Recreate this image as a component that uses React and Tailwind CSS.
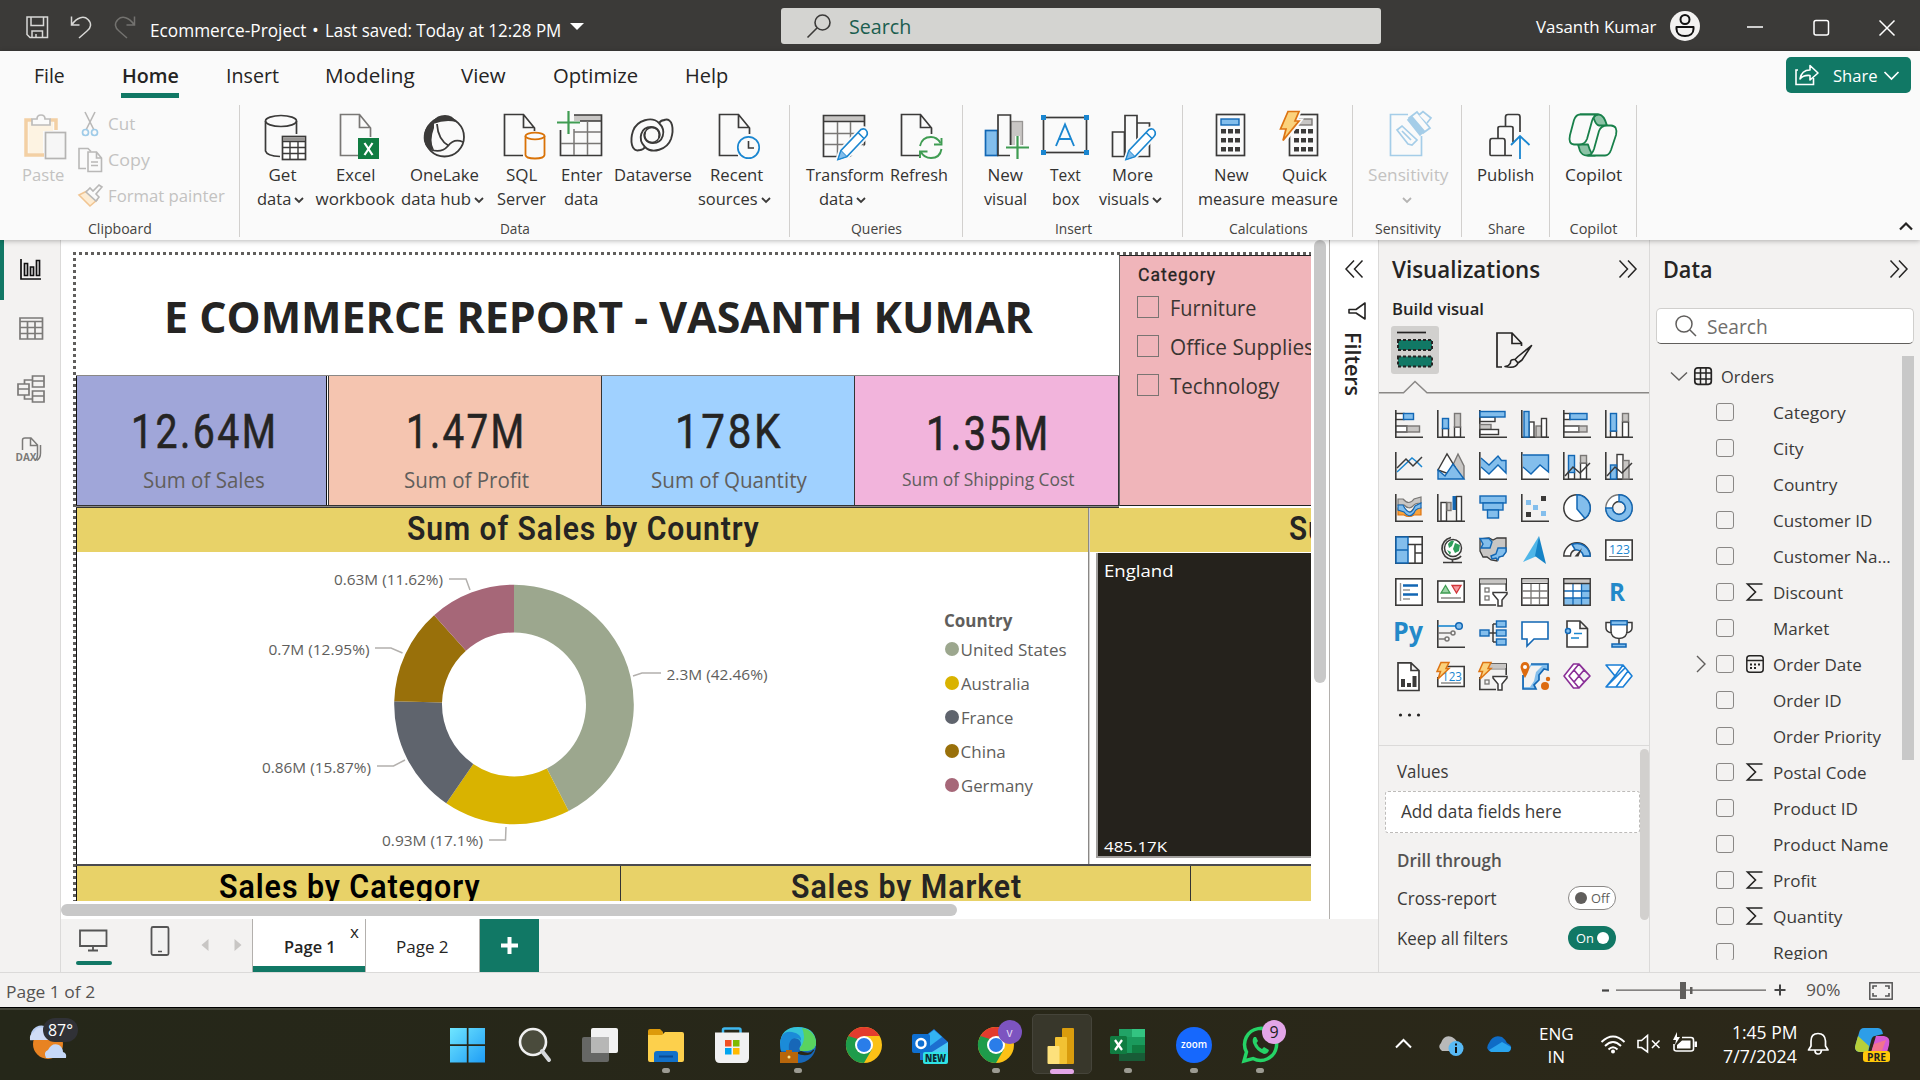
import React, { useLayoutEffect, useRef, useState } from "react";

/* Text set to a fixed advance width, so labels keep their metrics in any fallback font. */
function T({ w, dy = 0, className = "", children }) {
  const ref = useRef(null);
  const [scale, setScale] = useState(1);
  useLayoutEffect(() => {
    if (w && ref.current) setScale((w - 1) / ref.current.offsetWidth);
  }, [w]);
  return (
    <span className={"block shrink-0 whitespace-nowrap " + className} style={w ? { width: w } : undefined}>
      <span ref={ref} className="inline-block origin-left" style={{ transform: `translate(1px, ${dy}px) scaleX(${scale})` }}>
        {children}
      </span>
    </span>
  );
}

const INK = "#3b3a39";
const BLUE = "#1a86d0";
const LB = "#83beec";
const DB = "#1267b4";

function Svg({ w, h, vb, className = "", children }) {
  return (
    <svg width={w} height={h} viewBox={vb || `0 0 ${w} ${h}`} fill="none" className={"block shrink-0 overflow-visible " + className}>
      {children}
    </svg>
  );
}

/* ---------- Title bar ---------- */
function TitleBar() {
  return (
    <header className="flex h-[51px] shrink-0 items-center bg-[#3b3a38] text-white">
      <div className="flex h-full w-[781px] items-center">
        <Svg w={148} h={51}>
          <g stroke="#d8d8d6" strokeWidth="1.5">
            <path d="M27 17H47.5V37.5H30L27 34.5Z M31 17V25.5H43.5V17 M32 37V31H42.5V37 M36 37V34" />
            <path d="M71.5 16.5V25H79.5 M72 24.5C77 17 84 15.5 88 19.5C92 23.5 91 28 87 31L79 38" />
            <path stroke="#73726f" d="M134.5 16.5V25H126.5 M134 24.5C129 17 122 15.5 118 19.5C114 23.5 115 28 119 31L127 38" />
          </g>
        </Svg>
        <div className="ml-[1px] flex items-center pt-[8px] text-[18px] leading-6">
          <T w={157}>Ecommerce-Project</T>
          <T w={8} className="ml-[5px]">•</T>
          <T w={237} className="ml-[5px]">Last saved: Today at 12:28 PM</T>
        </div>
        <Svg w={14} h={8} className="ml-[9px] mt-[3px]">
          <path d="M0 0H14L7 7Z" fill="#fff" />
        </Svg>
      </div>
      <div className="flex h-9 w-[600px] items-center rounded-[3px] bg-[#d4d4d1]">
        <Svg w={24} h={24} className="ml-[26px]">
          <circle cx="15.5" cy="8.5" r="7.5" stroke={INK} strokeWidth="1.6" />
          <path d="M10 14L0.5 23.5" stroke={INK} strokeWidth="1.6" />
        </Svg>
        <T w={63} dy={1} className="ml-[17px] text-[20px] leading-6 text-[#1b5e4f]">Search</T>
      </div>
      <T w={121} dy={1} className="ml-[154px] text-[17px] leading-6">Vasanth Kumar</T>
      <Svg w={30} h={30} className="ml-[14px]">
        <circle cx="15" cy="15" r="15" fill="#f3f2f1" />
        <circle cx="15" cy="8.5" r="4.5" stroke="#111" strokeWidth="2" />
        <path d="M6.5 16H23.5V18C23.5 22.5 20 25 15 25S6.5 22.5 6.5 18Z" stroke="#111" strokeWidth="2" strokeLinejoin="round" />
      </Svg>
      <Svg w={150} h={20} className="ml-[46px] mt-[5px]">
        <g stroke="#fff" strokeWidth="1.5">
          <path d="M1 9H17 M133.500 2.500L148.500 17.500M148.500 2.500L133.500 17.500" />
          <rect x="68" y="2.500" width="14.500" height="14.500" rx="2" />
        </g>
      </Svg>
    </header>
  );
}

/* ---------- Ribbon ---------- */
const TABS = [
  ["File", 32, "ml-[33px]"],
  ["Home", 58, "ml-[56px] font-semibold"],
  ["Insert", 54, "ml-[46px]"],
  ["Modeling", 91, "ml-[45px]"],
  ["View", 46, "ml-[45px]"],
  ["Optimize", 86, "ml-[46px]"],
  ["Help", 44, "ml-[46px]"],
];

function Chev({ color = INK }) {
  return (
    <Svg w={10} h={7} className="mt-[3px]">
      <path d="M1 1L5 5L9 1" stroke={color} strokeWidth="1.8" />
    </Svg>
  );
}

function Btn({ className, vb, l1, w1, l2, w2, chev, dim, children }) {
  const w = Number(vb.split(" ")[2]);
  return (
    <div className={"flex shrink-0 flex-col items-center pt-[3px] text-[17px] leading-6 " + (dim ? "text-[#c3c2c1] " : "text-[#333231] ") + className}>
      <Svg w={w} h={54} vb={vb} className="mb-px">{children}</Svg>
      <T w={w1}>{l1}</T>
      <div className={"flex h-6 items-center justify-center " + (chev && l2 ? "-ml-[4px] gap-[3px]" : "")}>
        {l2 && <T w={w2}>{l2}</T>}
        {chev && <Chev color={dim ? "#b5b4b3" : INK} />}
      </div>
    </div>
  );
}

function Group({ className, label, lw, children }) {
  return (
    <section className={"flex h-[132px] shrink-0 flex-col border-r border-[#d2d0ce] " + className}>
      <div className="flex h-[114px]">{children}</div>
      <div className="flex justify-center text-[14.500px] leading-[21px] text-[#444341]">
        <T w={lw} dy={2}>{label}</T>
      </div>
    </section>
  );
}

function Doc({ x, c = INK, cut }) {
  return <path d={`M${x + 30.500} ${cut || 134}V128L${x + 19.500} 114.500H${x + 0.500}V155.500H${x + 19} M${x + 19.500} 115V127.500H${x + 30}`} stroke={c} strokeWidth="1.7" />;
}

function Pencil({ x, y }) {
  return (
    <g>
      <path d={`M${x} ${y + 31}L${x + 3} ${y + 22}L${x + 23} ${y + 1}Q${x + 27} ${y - 1} ${x + 29} ${y + 3}Q${x + 30} ${y + 6} ${x + 28} ${y + 8}L${x + 9} ${y + 28}Z`} fill="#fafafa" stroke="#fafafa" strokeWidth="5" />
      <path d={`M${x} ${y + 31}L${x + 3} ${y + 22}L${x + 23} ${y + 1}Q${x + 27} ${y - 1} ${x + 29} ${y + 3}Q${x + 30} ${y + 6} ${x + 28} ${y + 8}L${x + 9} ${y + 28}Z M${x + 20} ${y + 4}L${x + 26} ${y + 10}`} fill="#fff" stroke={BLUE} strokeWidth="1.6" />
      <path d={`M${x} ${y + 31}L${x + 3} ${y + 22}L${x + 9} ${y + 28}Z`} fill={LB} stroke={BLUE} />
    </g>
  );
}

function Calc({ x, gray }) {
  return (
    <g>
      <rect x={x + 0.5} y="114.500" width="28" height="41" fill="#fafafa" stroke={INK} strokeWidth="1.7" />
      <rect x={x + 5} y="119" width="18" height="6" fill={gray ? "#c8c6c4" : LB} stroke={gray ? "#797775" : DB} strokeWidth="1.4" />
      {[129, 138, 147].map((y) => [5, 12, 19].map((d) => <rect key={y + "-" + d} x={x + d} y={y} width="5" height="4.5" fill={INK} />))}
    </g>
  );
}

function Ribbon() {
  return (
    <div className="relative z-10 flex h-[189px] shrink-0 flex-col bg-[#fafafa] shadow-[0_1px_5px_rgba(0,0,0,0.28)]">
      <div className="flex h-[54px] text-[20px] text-[#252423]">
        {TABS.map(([t, w, c]) => (
          <div key={t} className={"flex h-[47px] shrink-0 flex-col " + c}>
            <T w={w} dy={1} className="pt-[10px] leading-[28px]">{t}</T>
            {t === "Home" && <div className="mt-[4px] h-[5px] bg-[#117865]" />}
          </div>
        ))}
        <div className="mr-[9px] ml-auto mt-[6px] flex h-9 w-[125px] items-center rounded-[5px] bg-[#117865] text-white">
          <Svg w={24} h={22} className="ml-[9px]">
            <path d="M3 6H1V20.500H18.500V14" stroke="#fff" strokeWidth="1.6" />
            <path d="M5 15C6 9 10 6 15 6V1.500L23 9L15 16V11.500C10 11 7 12.500 5 15Z" stroke="#fff" strokeWidth="1.6" strokeLinejoin="round" />
          </Svg>
          <T w={46} dy={1} className="ml-[13px] text-[17px] leading-6">Share</T>
          <Svg w={15} h={9} className="ml-[6px]">
            <path d="M0.500 1L7.500 8L14.500 1" stroke="#fff" strokeWidth="1.7" />
          </Svg>
        </div>
      </div>

      <div className="flex">
        <Group className="w-[240px]" label="Clipboard" lw={65}>
          <Btn className="ml-[8px] w-[68px]" vb="8 108 68 54" l1="Paste" w1={43} dim>
            <path d="M32 120H26V155H44 M50 120H56V130" stroke="#f3d0a4" strokeWidth="3.500" />
            <path d="M28.500 122V153H43V131H53V122Z" fill="#fdf3e2" />
            <path d="M32 125V119H37Q37 115 41 115T45 119H50V125Z" fill="#fafafa" stroke="#bdbcbb" strokeWidth="1.700" />
            <rect x="45.500" y="132.500" width="20" height="26" fill="#f6f6f6" stroke="#b5b4b3" strokeWidth="1.700" />
          </Btn>
          <div className="flex flex-col pl-[2px] text-[17px] leading-9 text-[#c3c2c1]">
            <div className="flex h-9">
              <Svg w={30} h={36} vb="78 104 30 36">
                <path d="M85 111L94 129 M95 111L86 129" stroke="#b9b8b7" strokeWidth="1.600" />
                <circle cx="85.500" cy="131.500" r="3" stroke="#9fcbe8" strokeWidth="1.700" />
                <circle cx="94.500" cy="131.500" r="3" stroke="#9fcbe8" strokeWidth="1.700" />
              </Svg>
              <T w={28} dy={1} className="ml-[-1px]">Cut</T>
            </div>
            <div className="flex h-9">
              <Svg w={30} h={36} vb="78 140 30 36">
                <path d="M86 167.500H79V147.500H88L91 150.500" stroke="#b9b8b7" strokeWidth="1.600" />
                <path d="M88 151H96.500L101.500 157V170.500H88Z M96.500 151V157H101 M91 161H98M91 164.500H98" stroke="#b9b8b7" strokeWidth="1.600" />
              </Svg>
              <T w={43} dy={1} className="ml-[-1px]">Copy</T>
            </div>
            <div className="flex h-9">
              <Svg w={30} h={36} vb="78 176 30 36">
                <path d="M79 194L87 190L97 199L90 205Z" fill="#fdecd3" stroke="#f1c592" strokeWidth="1.600" />
                <path d="M86 191L90 187L93 190L99 184L102 186L96 193L99 196L96 200Z" fill="#fafafa" stroke="#b9b8b7" strokeWidth="1.600" />
              </Svg>
              <T w={118} dy={1} className="ml-[-1px]">Format painter</T>
            </div>
          </div>
        </Group>

        <Group className="w-[550px]" label="Data" lw={31}>
          <Btn className="ml-[9px] w-[66px]" vb="249 108 66 54" l1="Get" w1={29} l2="data" w2={35} chev>
            <ellipse cx="281" cy="121" rx="15.500" ry="5.500" stroke={INK} strokeWidth="1.700" />
            <path d="M265.500 121V151Q267 156 280 156.500 M296.500 121V134" stroke={INK} strokeWidth="1.700" />
            <rect x="282.500" y="136.500" width="23" height="23" fill="#fff" stroke={INK} strokeWidth="1.700" />
            <path d="M283 139H305" stroke="#979593" strokeWidth="3.500" />
            <path d="M283 141.500H305M283 147.500H305M283 153.500H305M290 141V159M298 141V159" stroke={INK} strokeWidth="1.400" />
          </Btn>
          <Btn className="w-[79px]" vb="315 108 79 54" l1="Excel" w1={40} l2="workbook" w2={80}>
            <Doc x={340} c="#797775" cut={137} />
            <rect x="358" y="138" width="21" height="21" fill="#107c41" />
            <path d="M364.500 143L372.500 155 M372.500 143L364.500 155" stroke="#fff" strokeWidth="2.200" />
          </Btn>
          <Btn className="ml-[3px] w-[93px]" vb="397 108 93 54" l1="OneLake" w1={70} l2="data hub" w2={71} chev>
            <circle cx="444.500" cy="137" r="19.500" stroke={INK} strokeWidth="1.800" />
            <path d="M433 121Q437 115 445 115T456 122Q446 119 433 124Z" fill={INK} />
            <path d="M434 121Q422 128 424 141Q426 150 434 150Q429 141 434 128Z" fill={INK} />
            <path d="M437 124Q438 140 449 146 M429 149Q441 154 448 146Q454 138 463 142" stroke={INK} strokeWidth="1.800" />
          </Btn>
          <Btn className="ml-[4px] w-[54px]" vb="494 108 54 54" l1="SQL" w1={32} l2="Server" w2={50}>
            <Doc x={504} cut={131} />
            <path d="M525.500 136V155Q526 158.500 535 158.500T544.500 155V136" fill="#fafafa" stroke="#d97207" strokeWidth="1.800" />
            <ellipse cx="535" cy="136" rx="9.500" ry="3.300" fill="#fafafa" stroke="#d97207" strokeWidth="1.800" />
          </Btn>
          <Btn className="ml-[8px] w-[49px]" vb="556 108 49 54" l1="Enter" w1={42} l2="data" w2={35}>
            <path d="M574 115H601V121H574Z" fill="#c8c6c4" />
            <path d="M574 115H601.500V155.500H560.500V130 M580 121H601" stroke={INK} strokeWidth="1.700" />
            <path d="M574 132H601M561 143.500H601M574 129V155M587.500 121V155" stroke="#797775" strokeWidth="1.500" />
            <path d="M568.500 111V134M557 122.500H580" stroke="#3f9c52" strokeWidth="2.200" />
          </Btn>
          <Btn className="ml-[6px] w-[83px]" vb="611 108 83 54" l1="Dataverse" w1={79}>
            <path d="M640 150C631 153 630 140 633 131C637 120 652 116 659 123C667 131 663 143 653 143C646 143 643 137 645 132" stroke={INK} strokeWidth="1.900" />
            <path d="M664 120C673 117 674 130 671 139C667 150 652 154 645 147C637 139 641 127 651 127C658 127 661 133 659 138" stroke={INK} strokeWidth="1.900" />
            <circle cx="652" cy="135" r="7.500" stroke={INK} strokeWidth="1.500" />
            <path d="M659 123Q661 120 665 120 M645 147Q643 150 640 150" stroke={INK} strokeWidth="1.900" />
          </Btn>
          <Btn className="w-[83px]" vb="694 108 83 54" l1="Recent" w1={54} l2="sources" w2={61} chev>
            <Doc x={719} />
            <circle cx="748.500" cy="147.500" r="13" fill="#fafafa" />
            <circle cx="748.500" cy="147.500" r="10.700" stroke={BLUE} strokeWidth="1.700" />
            <path d="M748.500 141V148H754" stroke={INK} strokeWidth="1.600" />
          </Btn>
        </Group>

        <Group className="w-[173px]" label="Queries" lw={52}>
          <Btn className="ml-[10px] w-[88px]" vb="800 108 88 54" l1="Transform" w1={79} l2="data" w2={35} chev>
            <path d="M824 116H864V121H824Z" fill="#c8c6c4" />
            <path d="M823.500 115.500H864.500V156.500H823.500ZM824 121.500H864" stroke={INK} strokeWidth="1.700" />
            <path d="M824 133.500H864M824 144.500H864M837.500 122V156M850.500 122V156" stroke="#797775" strokeWidth="1.500" />
            <path d="M849 158V163H880V133Z" fill="#fafafa" />
            <Pencil x={838} y={128.500} />
          </Btn>
          <Btn className="w-[60px]" vb="888 108 60 54" l1="Refresh" w1={59}>
            <Doc x={901} />
            <path d="M920 146Q922 137 931 137Q937 137 940.500 143 M941.500 149Q940 158 931 158Q924 158 921 152" stroke="#3f9c52" strokeWidth="1.900" />
            <path d="M941.500 138V144.500H934 M920 158V151.500H927.500" stroke="#3f9c52" strokeWidth="1.900" />
          </Btn>
        </Group>

        <Group className="w-[220px]" label="Insert" lw={38}>
          <Btn className="ml-[17px] w-[50px]" vb="980 108 50 54" l1="New" w1={37} l2="visual" w2={44}>
            <rect x="1011" y="121.500" width="11.500" height="26" fill="#c8c6c4" stroke="#979593" strokeWidth="1.300" />
            <rect x="985.500" y="130.500" width="12" height="25" fill={LB} stroke={DB} strokeWidth="1.700" />
            <path d="M1010 155.500H998V115H1010.500V146" fill="#fafafa" stroke={INK} strokeWidth="1.700" />
            <path d="M1017.500 136V159M1006 147.500H1029" stroke="#fafafa" strokeWidth="5" />
            <path d="M1017.500 136V159M1006 147.500H1029" stroke="#3f9c52" strokeWidth="2.200" />
          </Btn>
          <Btn className="ml-[10px] w-[50px]" vb="1040 108 50 54" l1="Text" w1={32} l2="box" w2={29}>
            <rect x="1043.500" y="117.500" width="43" height="35" stroke={INK} strokeWidth="1.700" />
            {[[1041, 115], [1084, 115], [1041, 150], [1084, 150]].map(([x, y]) => <rect key={x + "," + y} x={x} y={y} width="5" height="5" fill={BLUE} />)}
            <path d="M1056 146L1065 124.500L1074 146M1059 139H1071" stroke={BLUE} strokeWidth="1.900" />
          </Btn>
          <Btn className="ml-[2px] w-[80px]" vb="1092 108 80 54" l1="More" w1={42} l2="visuals" w2={51} chev>
            <path d="M1112.500 132H1124.500V156.500H1112.500Z M1125 115.500H1137V156.500H1125ZM1137 123H1149.500V156.500H1137Z" stroke={INK} strokeWidth="1.700" />
            <Pencil x={1126} y={128.500} />
          </Btn>
        </Group>

        <Group className="w-[170px]" label="Calculations" lw={80}>
          <Btn className="ml-[14px] w-[68px]" vb="1197 108 68 54" l1="New" w1={36} l2="measure" w2={68}>
            <Calc x={1216} />
          </Btn>
          <Btn className="ml-[5px] w-[68px]" vb="1270 108 68 54" l1="Quick" w1={46} l2="measure" w2={68}>
            <Calc x={1289} gray />
            <path d="M1288 111.500H1299L1295 121H1299L1284 140.500L1286 129H1281Z" fill="#fafafa" stroke="#fafafa" strokeWidth="5" />
            <path d="M1288 111.500H1299L1295 121H1299L1283 140.500L1286 129H1280.500Z" fill="#fbd27c" stroke="#dd7413" strokeWidth="1.700" />
          </Btn>
        </Group>

        <Group className="w-[109px]" label="Sensitivity" lw={67}>
          <Btn className="ml-[9px] w-[90px]" vb="1362 108 90 54" l1="Sensitivity" w1={81} chev dim>
            <g stroke="#a5cde8" strokeWidth="1.700">
              <path d="M1408 114.500H1390.500V155.500H1421.500V136" />
              <path d="M1397 130L1402 126L1417 140L1412 145L1408 144Z M1402 131L1411 140" fill="#fafafa" />
              <path d="M1409 118L1417 112L1430 128L1423 133Z" fill="#fafafa" />
              <path d="M1408 120L1412 117L1424 131L1420 135Z" fill="#a5cde8" />
              <path d="M1419 115L1423 111.500L1431 118L1427 123" fill="#fafafa" />
            </g>
          </Btn>
        </Group>

        <Group className="w-[88px]" label="Share" lw={38}>
          <Btn className="ml-[8px] w-[70px]" vb="1470 108 70 54" l1="Publish" w1={58}>
            <path d="M1512 155.500H1491Q1490 155.500 1490 154V141Q1490 138.500 1492 138.500H1503Q1505 138.500 1505 141V155 M1498 138V128Q1498 126.500 1500 126.500H1511Q1513 126.500 1513 128V142 M1505.500 126V117Q1505.500 114.500 1508 114.500H1518Q1520 114.500 1520 117V132" stroke={INK} strokeWidth="1.700" />
            <path d="M1520 159V136M1511 145L1520 136L1529.500 145" stroke={BLUE} strokeWidth="1.800" />
          </Btn>
        </Group>

        <Group className="w-[87px]" label="Copilot" lw={49}>
          <Btn className="ml-[10px] w-[66px]" vb="1560 108 66 54" l1="Copilot" w1={58}>
            <g stroke="#18804a" strokeWidth="1.800" strokeLinejoin="round">
              <path d="M1580 114.500H1599Q1604 115 1607 125.500H1599Q1596 125 1594 119Q1592 114.500 1589 114.500" fill="#8cc3a6" />
              <path d="M1578 144.500L1580 151Q1582 155.500 1587 155.500H1595Q1591 155 1588 144.500Z" fill="#8cc3a6" />
              <path d="M1580 114.500H1598Q1594 115 1592 121L1587 139Q1585 144.500 1579 144.500H1574Q1568 144 1570 135L1574 120Q1576 114.500 1580 114.500Z" fill="#fafafa" />
              <path d="M1605 155.500H1588Q1592 155 1594 149L1599 131Q1601 125.500 1607 125.500H1611Q1618 126 1616 135L1611 150Q1609 155.500 1605 155.500Z" fill="#fafafa" />
            </g>
          </Btn>
        </Group>
        <Svg w={14} h={10} className="mr-[7px] ml-auto mt-[116px]">
          <path d="M1 8.500L7 2.500L13 8.500" stroke="#252423" strokeWidth="2.200" />
        </Svg>
      </div>
    </div>
  );
}

/* ---------- Left navigation ---------- */
function Nav() {
  return (
    <nav className="flex w-[61px] shrink-0 border-r border-[#dbdad9] bg-[#f3f2f1]">
      <div className="h-[60px] w-1 bg-[#117865]" />
      <Svg w={56} h={240} vb="4 240 56 240">
        <g stroke="#111" strokeWidth="1.700">
          <path d="M21 259V279H41" />
          <path d="M24.500 263.500H27.500V275.500H24.500ZM30.500 267H33.500V275.500H30.500ZM36.500 260.500H39.500V275.500H36.500Z" />
        </g>
        <g stroke="#7b7a78" strokeWidth="1.700">
          <path d="M20 318H42.500V339H20ZM20 321.500H42M20 327.500H42M20 333.500H42M27.500 321V339M35 321V339" />
          <path d="M32.500 376H44V387H32.500ZM32.500 381H44M32.500 391H44V402H32.500ZM32.500 396H44M18 384H29V395H18ZM18 389H29M24.500 384V380H32M24.500 395V399H32" />
          <path d="M22.500 450V440Q22.500 438 25 438H31L37.500 445V455Q37.500 459 35 460 M30.500 438V445.500H37 M40.500 445V453Q40.500 458 37 460.500" strokeWidth="1.500" />
        </g>
        <text x="15.500" y="461" fontSize="11" fontWeight="700" textLength="21" lengthAdjust="spacingAndGlyphs" fill="#7b7a78">DAX</text>
      </Svg>
    </nav>
  );
}

/* ---------- Report canvas ---------- */
const SLICES = [
  [42.46, "#9ca78e"],
  [17.1, "#d9b300"],
  [15.87, "#5f646d"],
  [12.95, "#99700a"],
  [11.62, "#a66778"],
];

function arcs() {
  let a = -Math.PI / 2;
  return SLICES.map(([p, c]) => {
    const b = a + (p / 100) * Math.PI * 2;
    const pt = (r, t) => `${(514 + r * Math.cos(t)).toFixed(2)} ${(704.5 + r * Math.sin(t)).toFixed(2)}`;
    const d = `M${pt(119.8, a)}A119.8 119.8 0 0 1 ${pt(119.8, b)}L${pt(72, b)}A72 72 0 0 0 ${pt(72, a)}Z`;
    a = b;
    return { d, c };
  });
}

const CALLOUTS = [
  ["0.63M (11.62%)", 334, 585, 109, "M449 579H466L470 590"],
  ["0.7M (12.95%)", 268.5, 655, 101, "M375 648H391L402.500 653"],
  ["0.86M (15.87%)", 262, 772.7, 109, "M377 766H393.500L405 760"],
  ["0.93M (17.1%)", 382, 846, 101, "M489 840H505.500L506 827"],
  ["2.3M (42.46%)", 666.5, 680, 101, "M633 676L642 673H661"],
];

const LEGEND = [
  ["United States", 107, "bg-[#9ca78e]"],
  ["Australia", 70, "bg-[#d9b300]"],
  ["France", 53, "bg-[#5f646d]"],
  ["China", 46, "bg-[#99700a]"],
  ["Germany", 73, "bg-[#a66778]"],
];

function Card({ value, vw, label, lw, className, small }) {
  return (
    <div className={"flex h-[129px] shrink-0 flex-col items-center " + className}>
      <T w={vw} dy={1} className={"font-['Roboto'] text-[48px] tracking-[3px] leading-[56px] text-[#252423] [-webkit-text-stroke:0.6px_#252423] " + (small ? "pt-[29px]" : "pt-[27px]")}>{value}</T>
      <T w={lw} dy={1} className={"text-[#605e5c] " + (small ? "text-[17.5px] leading-[34px]" : "text-[21.500px] leading-[39px]")}>{label}</T>
    </div>
  );
}

function Report() {
  return (
    <div className="h-[661px] w-[1250px] overflow-hidden bg-white pt-[12px] pl-[12px]">
      <div className="h-[3px] bg-[repeating-linear-gradient(90deg,#605e5c_0_3px,#fff_3px_6px)]" />
      <div className="flex w-[1400px]">
        <div className="h-[660px] w-[3px] shrink-0 bg-[repeating-linear-gradient(180deg,#fff_0_3px,#605e5c_3px_6px)]" />
        <div className="flex flex-col">
          <div className="flex">
            <div className="w-[1043px]">
              <div className="flex h-[121px] border-b border-[#8a8886] pl-[87px]">
                <T w={870} className="pt-[2px] text-[43.500px] font-bold leading-[119px] text-[#252423]">E COMMERCE REPORT - VASANTH KUMAR</T>
              </div>
              <div className="flex">
                <Card className="w-[251px] border-x border-x-[#111] bg-[#a0a6d9] pl-[4px]" value="12.64M" vw={148} label="Sum of Sales" lw={123} />
                <Card className="ml-px w-[274px] border-x border-x-[#333] bg-[#f5c5b0] pl-[2px]" value="1.47M" vw={122} label="Sum of Profit" lw={126} />
                <Card className="w-[253px] border-r border-r-[#333] bg-[#a0d1ff]" value="178K" vw={109} label="Sum of Quantity" lw={157} />
                <Card className="w-[264px] border-r border-r-[#333] bg-[#f2b4dc] pl-[2px]" value="1.35M" vw={126} label="Sum of Shipping Cost" lw={174} small />
              </div>
              <div className="h-[3px] border-y border-[#333] bg-[#8a8886]" />
            </div>
            <div className="h-[251px] w-[300px] border-t border-b border-l border-[#222] border-l-[#666] bg-[#f0b5ba] pl-[17px]">
              <T w={79} className="pt-[6px] font-['Roboto'] text-[18px] tracking-[1px] leading-[25px] text-[#252423] [-webkit-text-stroke:0.3px_#252423]">Category</T>
              {[["Furniture", 87], ["Office Supplies", 145], ["Technology", 110]].map(([t, w]) => (
                <div key={t} className="flex h-[39px] items-center">
                  <div className="h-[22px] w-[22px] border-[1.5px] border-[#7a7472]" />
                  <T w={w} dy={1} className="ml-[10px] text-[21.500px] leading-[39px] text-[#3b3532]">{t}</T>
                </div>
              ))}
            </div>
          </div>

          <div className="flex">
            <div className="flex w-[1013px] flex-col border-r border-l border-r-[#8a8886] border-l-[#111]">
              <div className="flex h-[44px] bg-[#e8d268] pl-[329px]">
                <T w={354} dy={1} className="font-['Roboto'] text-[32.500px] font-semibold tracking-[1px] leading-[41px] text-[#252423]">Sum of Sales by Country</T>
              </div>
              <div className="flex h-[312px]">
                <svg width="860" height="312" viewBox="77 552 860 312" className="shrink-0">
                  {arcs().map((s) => <path key={s.c} d={s.d} fill={s.c} />)}
                  {CALLOUTS.map(([t, x, y, w, d]) => (
                    <g key={t}>
                      <path d={d} fill="none" stroke="#b3b0ad" strokeWidth="1.500" />
                      <text x={x} y={y} textLength={w} lengthAdjust="spacingAndGlyphs" fontSize="15" fill="#605e5c">{t}</text>
                    </g>
                  ))}
                </svg>
                <div className="flex flex-col pt-[56px] pl-[6px] text-[17px] text-[#605e5c]">
                  <T w={69} className="font-bold leading-[25px]">Country</T>
                  <div className="-mt-px flex flex-col">
                    {LEGEND.map(([t, w, c]) => (
                      <div key={t} className="flex h-[34.100px] items-center">
                        <div className={"ml-[1.500px] h-[14px] w-[14px] rounded-full " + c} />
                        <T w={w} className="ml-[1px] leading-[33px]">{t}</T>
                      </div>
                    ))}
                  </div>
                </div>
              </div>
            </div>
            <div className="flex w-[310px] flex-col border-l border-[#d0cfcd]">
              <div className="flex h-[44px] bg-[#e8d268] pl-[198px]">
                <T w={190} dy={1} className="font-['Roboto'] text-[32.500px] font-semibold tracking-[1px] leading-[41px] text-[#252423]">Sum of Profit</T>
              </div>
              <div className="mt-px ml-[6px] flex h-[305px] flex-col justify-between border-b-2 border-l-2 border-[#a19f9d] bg-[#25221c] text-white">
                <T w={71} className="pt-[5px] pl-[5px] text-[17px] leading-[26px]">England</T>
                <T w={64} dy={-1} className="pl-[5px] text-[15px] leading-[18px]">485.17K</T>
              </div>
            </div>
          </div>
          <div className="h-[2px] w-[1330px] bg-[#4a4a4e]" />
          <div className="flex h-[44px] border-l border-[#111] bg-[#e8d268] font-['Roboto'] text-[32.500px] font-semibold tracking-[1px] leading-[40px]">
            <div className="w-[544px] border-r border-[#333] pl-[141px] text-black"><T w={262} dy={1}>Sales by Category</T></div>
            <div className="w-[570px] border-r border-[#333] pl-[169px] text-[#252423]"><T w={232} dy={1}>Sales by Market</T></div>
          </div>
        </div>
      </div>
    </div>
  );
}

function PagesBar() {
  return (
    <div className="flex h-[53px] bg-[#f3f2f1] text-[17px] text-[#252423]">
      <div className="flex w-[51px] flex-col pl-[15px]">
        <Svg w={36} h={42} vb="76 919 36 42">
          <path d="M80 930.500H106.500V946H80ZM93 946V950.500M88 950.500H98" stroke="#555" strokeWidth="1.800" />
        </Svg>
        <div className="h-1 w-9 rounded-full bg-[#117865]" />
      </div>
      <Svg w={140} h={53} vb="112 919 140 53">
        <rect x="151.500" y="927" width="17" height="28" rx="1.500" stroke="#555" strokeWidth="1.800" />
        <path d="M158 951.500H162" stroke="#555" strokeWidth="1.500" />
        <path d="M208.500 939V951L201.500 945ZM234.500 939V951L241.500 945Z" fill="#c8c6c4" />
      </Svg>
      <div className="flex w-[114px] flex-col border-x border-[#b3b0ad] bg-white">
        <div className="flex h-[47px]">
          <T w={53} className="ml-[30px] pt-[17px] font-semibold leading-[22px]">Page 1</T>
          <T w={10} dy={-1} className="ml-[13px] pt-[4px] leading-[20px]">x</T>
        </div>
        <div className="h-[6px] bg-[#117865]" />
      </div>
      <div className="flex w-[113px] bg-white">
        <T w={54} className="ml-[29px] pt-[17px] leading-[22px]">Page 2</T>
      </div>
      <div className="flex w-[60px] items-center justify-center border-l border-[#b3b0ad] bg-[#117865]">
        <Svg w={17} h={17}><path d="M8.500 0V17M0 8.500H17" stroke="#fff" strokeWidth="4" /></Svg>
      </div>
    </div>
  );
}

/* ---------- Visualizations ---------- */
const Bx = ({ x, y, w, h, k = "w" }) => (
  <rect x={x} y={y} width={w} height={h} strokeWidth="1.400" fill={k === "b" ? LB : k === "g" ? "#c8c6c4" : "#fff"} stroke={k === "b" ? DB : k === "g" ? "#797775" : INK} />
);
const Axis = () => <path d="M0.800 0V27.200H28" stroke={INK} strokeWidth="1.600" />;
const Bolt = () => <path d="M4 0.500H12L9 6.500H12L1 17L3.500 9.500H0Z" fill="#fbd27c" stroke="#dd7413" strokeWidth="1.500" />;
const Funnel = () => <path d="M14 14.500H28V16L23 22V28H19V22L14 16Z" fill="#fff" stroke={INK} strokeWidth="1.500" />;
const Trend = () => <path d="M2 24L10 15L17 21L27 11" stroke={INK} strokeWidth="1.500" />;

const VISUALS = [
  <><Axis /><Bx x={1} y={3.500} w={8} h={6} /><Bx x={8.500} y={3.500} w={10} h={6} k="b" /><Bx x={1} y={16} w={11} h={6} /><Bx x={12} y={16} w={12.500} h={6} k="g" /></>,
  <><Axis /><Bx x={5.500} y={18.500} w={6} h={8.500} /><Bx x={5.500} y={8.500} w={6} h={10} k="b" /><Bx x={17.500} y={17} w={6} h={10} /><Bx x={17.500} y={3.500} w={6} h={13.500} k="g" /></>,
  <><Axis /><Bx x={1} y={7} w={15} h={4.500} /><Bx x={1} y={14.500} w={11} h={5} k="g" /><Bx x={1} y={19.500} w={18.500} h={5} /><Bx x={1} y={1.500} w={25} h={5.500} k="b" /></>,
  <><Axis /><Bx x={8} y={12} w={5} h={15} /><Bx x={15} y={16} w={5.500} h={11} k="g" /><Bx x={20.500} y={8.500} w={5} h={18.500} /><Bx x={3} y={1.500} w={5} h={25.500} k="b" /></>,
  <><Axis /><Bx x={1} y={3.500} w={6} h={6} /><Bx x={7} y={3.500} w={17} h={6} k="b" /><Bx x={1} y={16} w={15} h={6} /><Bx x={16} y={16} w={8} h={6} k="g" /></>,
  <><Axis /><Bx x={5.500} y={21} w={6} h={6} /><Bx x={5.500} y={3.500} w={6} h={17.500} k="b" /><Bx x={17.500} y={12} w={6} h={15} /><Bx x={17.500} y={3.500} w={6} h={8} k="g" /></>,
  <><Axis /><path d="M2 20L17 6L22 10L27 15" stroke={BLUE} strokeWidth="1.500" /><path d="M2 16L11 7L18 14L27 5" stroke={INK} strokeWidth="1.500" /></>,
  <><path d="M15 15L21 2L27 14V27" fill="#c8c6c4" stroke="#797775" strokeWidth="1.400" /><path d="M1 18L10 2L18 15L12 22Z" fill="#fff" stroke={INK} strokeWidth="1.400" /><path d="M1 18L8 24L16 12L27 27H1Z" fill={LB} stroke={DB} strokeWidth="1.400" /></>,
  <><path d="M2 15L10 22L19 13L27 21V27H2Z" fill="#fff" /><Axis /><path d="M2 6L10 13L19 4L22.500 8.500H27V21L19 13L10 22L2 15" fill={LB} stroke={DB} strokeWidth="1.400" /></>,
  <><path d="M2 15L10 22L19 13L27 20V27H2Z" fill="#fff" /><Axis /><path d="M1.500 3H27.500V20L19 13L10 22L2 15" fill={LB} stroke={DB} strokeWidth="1.400" /></>,
  <><Axis /><Bx x={5.500} y={20} w={6} h={7} /><Bx x={5.500} y={3.500} w={6} h={17} k="b" /><Bx x={17.500} y={11} w={6} h={16} /><Bx x={17.500} y={3.500} w={6} h={7.500} k="g" /><Trend /></>,
  <><Axis /><Bx x={12} y={2.500} w={6} h={24.500} /><Bx x={18} y={8.500} w={6} h={18.500} k="g" /><Bx x={5.500} y={13} w={6} h={14} k="b" /><Trend /></>,
  <><Axis /><path d="M3 14H9Q14 22 19 14H26V21H19Q14 24 9 21H3Z" fill="#f8a33c" stroke="#dd7413" strokeWidth="1.200" /><path d="M3 5H8Q14 12 19 5L26 3V9Q20 9 18 12Q14 16 9 11H3Z" fill="#c8c6c4" stroke="#797775" strokeWidth="1.200" /><path d="M3 11H8Q11 17 14 18T20 12L26 9V14Q21 14 19 19Q14 25 9 18L3 16Z" fill={LB} stroke={DB} strokeWidth="1.200" /></>,
  <><Axis /><Bx x={4} y={8.500} w={5.500} h={18.500} /><Bx x={10} y={8.500} w={4} h={8} k="g" /><rect x="15.500" y="2" width="3.500" height="14" fill={DB} /><Bx x={19.500} y={2.500} w={5} h={24.500} /></>,
  <><Bx x={1} y={2} w={26} h={7} k="b" /><Bx x={4} y={9} w={20} h={7} k="b" /><Bx x={8.500} y={16} w={11} h={8} k="b" /></>,
  <><Axis /><g fill={LB}><rect x="5" y="6" width="5" height="5" /><rect x="12" y="11" width="5" height="5" /><rect x="20" y="17" width="5" height="5" /></g><g fill={INK}><rect x="20" y="2" width="5" height="5" /><rect x="5" y="18" width="5" height="5" /></g></>,
  <><circle cx="14" cy="14" r="13.200" fill="#fff" stroke={INK} strokeWidth="1.500" /><path d="M14 0.800A13.200 13.200 0 0 1 22 24.500L14 15Z" fill={LB} stroke={DB} strokeWidth="1.500" /></>,
  <><circle cx="14" cy="14" r="10" stroke="#fff" strokeWidth="6" /><circle cx="14" cy="14" r="13.200" stroke="#797775" strokeWidth="1.400" /><circle cx="14" cy="14" r="6.500" stroke={INK} strokeWidth="1.400" /><path d="M14 0.800A13.200 13.200 0 1 1 0.800 14H7.500A6.500 6.500 0 1 0 14 7.500Z" fill={LB} stroke={DB} strokeWidth="1.400" /></>,
  <><rect x="0.800" y="0.800" width="26.400" height="26.400" fill="#fff" stroke={INK} strokeWidth="1.600" /><path d="M1 1H13V27H1Z" fill={LB} stroke={DB} strokeWidth="1.500" /><path d="M1 14H13" stroke={DB} strokeWidth="1.500" /><path d="M13 8.500H27M20 8.500V27M20 17H27" stroke={INK} strokeWidth="1.500" /></>,
  <><circle cx="16" cy="12" r="8.500" fill="#fff" stroke={INK} strokeWidth="1.500" /><path d="M11 8Q14 3 17 5L15 10L12 12ZM18 7L23 9L22 15L18 17L16 13ZM10 14L14 16L13 19Z" fill="#2f9e5b" /><path d="M14 1.500Q5 4 5 13Q6 22 15 23.500Q22 23 24 20M15.500 23.500V26.500M6 26.500H25" stroke={INK} strokeWidth="1.700" /></>,
  <><path d="M1 3L10 2L14 4L18 2H27V15L24 20L18 21V25L12 24L8 21L4 21L1 15Z" fill="#c8c6c4" stroke={INK} strokeWidth="1.300" /><path d="M1 2.500H10L13 6L11 12H2L4 8Z" fill={LB} stroke={DB} strokeWidth="1.400" /><path d="M19 12H27V16L24 20L20 21L19 24L17 22L13 23L12 20L17 18Z" fill={LB} stroke={DB} strokeWidth="1.400" /></>,
  <><path d="M18 0L2 26L16 20Z" fill="#4fb6e8" /><path d="M18 0L25 28L14 20Z" fill="#1583c6" /></>,
  <><path d="M0.800 20A13.200 13.200 0 0 1 27.200 20H20.500A6.500 6.500 0 0 0 7.500 20Z" fill="#fff" stroke={INK} strokeWidth="1.500" /><path d="M9 8.500A13.200 13.200 0 0 1 27.200 20H20.500Q19 14 12 13.500Z" fill={LB} stroke={DB} strokeWidth="1.500" /><path d="M19 12L15.500 20.500H11.500Z" fill={INK} /></>,
  <><rect x="0.800" y="4" width="26.400" height="20" fill="#fff" stroke={INK} strokeWidth="1.600" /><text x="4" y="18" fontSize="13" textLength="21" lengthAdjust="spacingAndGlyphs" fill={BLUE}>123</text><path d="M4 20.500H24" stroke="#797775" /></>,
  <><rect x="0.800" y="0.800" width="26.400" height="26.400" fill="#fff" stroke={INK} strokeWidth="1.600" /><path d="M5.500 5V23M8 12H15M8 21H15" stroke="#979593" strokeWidth="1.400" /><path d="M8 7.500H23M8 16.500H23" stroke={DB} strokeWidth="2.500" /></>,
  <><rect x="0.800" y="3" width="26.400" height="21" fill="#fff" stroke={INK} strokeWidth="1.600" /><path d="M4 15L8.500 7.500L13 15Z" fill="#9bd3a5" stroke="#3f9c52" strokeWidth="1.300" /><path d="M15 7.500H24L19.500 15Z" fill="#f49aa0" stroke="#d13438" strokeWidth="1.300" /><path d="M4 20H24" stroke="#797775" strokeWidth="1.300" /></>,
  <><path d="M17 27H0.800V1H27.200V13" fill="#fff" stroke={INK} strokeWidth="1.600" /><path d="M1 3.500H27" stroke="#c8c6c4" strokeWidth="4" /><path d="M1 6H27" stroke={INK} /><rect x="6" y="10" width="4" height="4" stroke="#797775" strokeWidth="1.300" /><rect x="6" y="18" width="4" height="4" stroke="#797775" strokeWidth="1.300" /><Funnel /></>,
  <><rect x="0.800" y="0.800" width="26.400" height="26.400" fill="#fff" stroke={INK} strokeWidth="1.600" /><path d="M1.500 3H26.500" stroke="#c8c6c4" strokeWidth="3.500" /><path d="M1 5.500H27" stroke={INK} /><path d="M1 13H27M1 20H27M10 6V27M18.500 6V27" stroke="#797775" strokeWidth="1.300" /></>,
  <><rect x="0.800" y="0.800" width="26.400" height="26.400" fill="#fff" /><path d="M18 6H27V27H1V20H18Z" fill={LB} /><path d="M1.500 3H26.500" stroke="#c8c6c4" strokeWidth="3.500" /><path d="M1 13H27M1 20H27M10 6V27M18.500 6V27" stroke={DB} strokeWidth="1.300" /><path d="M0.800 0.800H27.200V27.200H0.800ZM1 5.500H27" stroke={INK} strokeWidth="1.500" /></>,
  <text x="4" y="23" fontSize="25" fontWeight="700" textLength="16" lengthAdjust="spacingAndGlyphs" fill="#2389c9">R</text>,
  <text x="-2" y="21" fontSize="26" fontWeight="700" textLength="30" lengthAdjust="spacingAndGlyphs" fill="#2389c9">Py</text>,
  <><Axis /><path d="M1 6H19" stroke={BLUE} strokeWidth="1.600" /><circle cx="22" cy="6" r="3.300" fill={LB} stroke={DB} strokeWidth="1.500" /><path d="M1 13H14M1 19H8" stroke="#797775" strokeWidth="1.500" /><circle cx="16" cy="13" r="2" stroke="#797775" strokeWidth="1.500" /><circle cx="10" cy="19" r="2" stroke="#797775" strokeWidth="1.500" /></>,
  <><path d="M10 13H17M14 4V22M14 4H18M14 22H18" stroke={INK} strokeWidth="1.500" /><Bx x={1} y={10} w={9} h={6} k="b" /><Bx x={17.500} y={1} w={9.500} h={6} k="b" /><Bx x={17.500} y={10} w={9.500} h={6} k="b" /><Bx x={17.500} y={19} w={9.500} h={6} k="b" /></>,
  <path d="M1 2H27V19H13L6 26V19H1Z" fill="#fff" stroke={DB} strokeWidth="1.600" />,
  <><path d="M4 8V1H17L24.500 8.500V27H4V14M17 1V8.500H24" fill="#fff" stroke={INK} strokeWidth="1.600" /><circle cx="5" cy="11" r="2.500" fill={LB} stroke={DB} strokeWidth="1.500" /><path d="M11 13.500H19M8 18H16" stroke={BLUE} strokeWidth="1.500" /></>,
  <><path d="M6 1H22V11Q22 18 14 18.500Q6 18 6 11ZM6 2.500H1V8Q1 12 7 13M22 2.500H27V8Q27 12 21 13M14 18V24" fill="#fff" stroke={INK} strokeWidth="1.500" /><rect x="6" y="0.800" width="16" height="4" fill={LB} stroke={DB} strokeWidth="1.300" /><path d="M7 27V24H21V27Z" fill={LB} stroke={DB} strokeWidth="1.500" /></>,
  <><path d="M3 0.800H16L24 8.500V28.500H3ZM16 1V8.500H24" fill="#fff" stroke={INK} strokeWidth="1.700" /><path d="M6 17H10V25H6ZM12 21H16V25H12ZM17.500 14H21.500V25H17.500Z" fill={INK} /></>,
  <><path d="M10 4.500H27.200V24.500H0.800V15" fill="#fff" stroke={INK} strokeWidth="1.600" /><text x="5" y="18.500" fontSize="13" textLength="20" lengthAdjust="spacingAndGlyphs" fill={BLUE}>123</text><path d="M4 21H24" stroke="#797775" strokeWidth="1.300" /><Bolt /></>,
  <><path d="M17 27.500H0.800V15M8 2H27.200V13" stroke={INK} strokeWidth="1.600" /><path d="M10 4H27" stroke="#c8c6c4" strokeWidth="4" /><path d="M12 7H27" stroke="#797775" /><rect x="6" y="18" width="4" height="4" stroke="#797775" strokeWidth="1.300" /><Bolt /><Funnel /></>,
  <><path d="M2 13V27H15L13 23L18 18V13L23 7L27 8V2H10" fill={LB} stroke={DB} strokeWidth="1.700" /><path d="M3 16V25H9L13 19L15 10L21 4H10Z" fill="#f3f2f1" /><path d="M-0.500 5Q0 0 4 0T8.500 5Q8 9 4 16Q0 9 -0.500 5Z" fill="#dd6b10" /><circle cx="4" cy="5" r="2" fill="#fff" /><circle cx="24" cy="24" r="4" fill="#dd6b10" /><circle cx="27" cy="17" r="2.200" fill="#dd6b10" /></>,
  <path d="M10.500 2L1 14L10.500 26L12 26L16 26L27 14L16 2ZM16 2L6 14L16 26M16 14L21 8L27 14L21 20ZM16 14L11 8L6 14L11 20ZM11 8L16 2L21 8M11 20L16 26L21 20" stroke="#8a2f97" strokeWidth="1.600" fill="#fff" strokeLinejoin="round" />,
  <path d="M1 3H18L27 14L18 25H1L10 14ZM10 14L18 3M1 25L20 6M11 25L23 9M18 25L27 14" stroke="#1a7fd6" strokeWidth="1.600" fill="#fff" strokeLinejoin="round" />,
];

const Dbl = ({ flip }) => (
  <Svg w={18} h={18} className="mt-[20px]">
    <path d={flip ? "M9 0.500L1 9L9 17.500M17.500 0.500L9.500 9L17.500 17.500" : "M0.500 0.500L8.500 9L0.500 17.500M9 0.500L17 9L9 17.500"} stroke="#252423" strokeWidth="1.500" />
  </Svg>
);

function Filters() {
  return (
    <div className="flex w-12 shrink-0 flex-col bg-white pl-[15px]">
      <Dbl flip />
      <Svg w={19} h={18} className="mt-[24px] ml-[3px]">
        <path d="M17 1V17L8 11H1V7.500H8Z" stroke="#252423" strokeWidth="1.600" strokeLinejoin="round" />
      </Svg>
      <div className="mt-[12px] ml-[-6px] w-[28px] text-[21.500px] font-semibold leading-[28px] text-[#252423] [writing-mode:vertical-rl]">
        Filters
      </div>
    </div>
  );
}

function VizPane() {
  return (
    <aside className="flex w-[272px] shrink-0 flex-col border-x border-[#dbdad9] bg-[#f3f2f1] text-[17px] text-[#252423]">
      <div className="flex h-[54px] justify-between pr-[12px] pl-[12px]">
        <T w={149} dy={1} className="pt-[12px] text-[22.500px] font-semibold leading-[34px]">Visualizations</T>
        <Dbl />
      </div>
      <T w={93} className="ml-[12px] h-[32px] pt-[3px] font-semibold leading-[24px]">Build visual</T>
      <div className="flex h-12 pl-[12px]">
        <div className="flex h-12 w-12 items-center justify-center rounded-[3px] bg-[#d1d0ce]">
          <Svg w={36} h={36}>
            <path d="M0 0.500H29" stroke="#252423" strokeWidth="1.700" />
            <path d="M1 8H35V18H1ZM1 24.500H35V34.500H1Z" fill="#117865" stroke="#252423" strokeWidth="2" strokeDasharray="3 2" />
          </Svg>
        </div>
        <Svg w={36} h={36} className="mt-[6px] ml-[57px]">
          <path d="M25.500 14V11L16 1H1V35H6M16 1V11.500H26" stroke="#252423" strokeWidth="1.700" />
          <path d="M35.500 13.500L26 28L22 31L19 27.500L22 24.500ZM19 27.500Q14 27 14.500 31Q13 34 9 34.500Q20 37 22 31" stroke="#252423" strokeWidth="1.600" fill="#f3f2f1" strokeLinejoin="round" />
        </Svg>
      </div>
      <Svg w={270} h={20} vb="1379 374 270 20">
        <path d="M1379 392.800H1403.500L1415 381.500L1427 392.800H1649" stroke="#8a8886" strokeWidth="1.500" />
      </Svg>
      <div className="mt-[16px] ml-[16px] grid grid-cols-[repeat(6,42px)] gap-y-[14px]">
        {VISUALS.map((v, i) => (
          <Svg key={i} w={28} h={28}>{v}</Svg>
        ))}
      </div>
      <Svg w={24} h={6} className="mt-[22px] ml-[20px]">
        <circle cx="1.500" cy="3" r="1.600" fill="#252423" /><circle cx="10.500" cy="3" r="1.600" fill="#252423" /><circle cx="19.500" cy="3" r="1.600" fill="#252423" />
      </Svg>
      <div className="mt-auto flex h-[227px] border-t border-[#dbdad9] text-[17.500px] text-[#3b3a39]">
        <div className="flex w-[261px] flex-col">
          <T w={52} className="ml-[17px] pt-[13px] leading-[24px]">Values</T>
          <div className="mt-[8px] ml-[6px] flex h-[42px] w-[255px] items-center rounded-[3px] border border-dashed border-[#bdbbb9] bg-white">
            <T w={162} dy={-1} className="ml-[14px] leading-[24px]">Add data fields here</T>
          </div>
          <T w={106} className="ml-[17px] pt-[15px] font-semibold leading-[25px] text-[#555352]">Drill through</T>
          <div className="mt-[13px] flex h-[24px] items-center pl-[17px]">
            <T w={101} className="leading-6">Cross-report</T>
            <div className="ml-[71px] flex h-6 w-12 items-center rounded-full border border-[#8a8886] bg-white">
              <div className="ml-[6px] h-3 w-3 rounded-full bg-[#605e5c]" />
              <T w={20} className="ml-[3px] text-[13.500px] leading-5 text-[#605e5c]">Off</T>
            </div>
          </div>
          <div className="mt-[16px] flex h-[24px] items-center pl-[17px]">
            <T w={112} className="leading-6">Keep all filters</T>
            <div className="ml-[60px] flex h-6 w-12 items-center rounded-full bg-[#117865]">
              <T w={19} className="ml-[7px] text-[13.500px] leading-5 text-white">On</T>
              <div className="ml-[3px] h-3 w-3 rounded-full bg-white" />
            </div>
          </div>
        </div>
        <div className="mt-[3px] h-[171px] w-[9px] rounded-full bg-[#d2d0ce]" />
      </div>
    </aside>
  );
}

/* ---------- Data pane ---------- */
const FIELDS = [
  ["Category", 74], ["City", 32], ["Country", 65], ["Customer ID", 100], ["Customer Na...", 119],
  ["Discount", 71, "sum"], ["Market", 57], ["Order Date", 90, "date"], ["Order ID", 70],
  ["Order Priority", 109], ["Postal Code", 95, "sum"], ["Product ID", 86], ["Product Name", 116],
  ["Profit", 44, "sum"], ["Quantity", 70, "sum"], ["Region", 56],
];

function DataPane() {
  return (
    <aside className="flex w-[270px] shrink-0 flex-col bg-[#f3f2f1] text-[17px] text-[#3b3a39]">
      <div className="flex h-[68px] justify-between pr-[12px] pl-[12px]">
        <T w={51} dy={1} className="pt-[12px] text-[22.500px] font-semibold leading-[34px] text-[#252423]">Data</T>
        <Dbl />
      </div>
      <div className="ml-[6px] flex h-9 w-[258px] items-center rounded-[5px] border border-[#d0cfcd] border-b-[#605e5c] bg-white">
        <Svg w={22} h={22} className="ml-[18px]">
          <circle cx="9" cy="9" r="8" stroke="#605e5c" strokeWidth="1.500" /><path d="M15 15L21 21" stroke="#605e5c" strokeWidth="1.500" />
        </Svg>
        <T w={62} className="ml-[9px] pt-[1px] text-[19.500px] leading-6 text-[#706e6c]">Search</T>
      </div>
      <div className="mt-[12px] flex">
        <div className="flex h-[604px] w-[252px] flex-col overflow-hidden pt-[2px]">
          <div className="flex h-9 shrink-0 items-center">
            <Svg w={42} h={20} className="ml-[20px]">
              <path d="M1 6.500L9 14L17 6.500" stroke="#605e5c" strokeWidth="1.400" />
              <rect x="24.800" y="1.800" width="16.500" height="16.500" rx="3" stroke="#252423" strokeWidth="1.700" />
              <path d="M25 7H41M25 13H41M30.500 2V18M36 2V18" stroke="#252423" strokeWidth="1.500" />
            </Svg>
            <T w={54} dy={0.5} className="ml-[8px] leading-9">Orders</T>
          </div>
          {FIELDS.map(([t, w, k]) => (
            <div key={t} className="flex h-9 shrink-0 items-center">
              <div className="flex w-[66px] justify-end pr-[10px]">
                {k === "date" && <Svg w={10} h={18}><path d="M1 1L9 9L1 17" stroke="#605e5c" strokeWidth="1.400" /></Svg>}
              </div>
              <div className="h-[18px] w-[18px] rounded-[3px] border-[1.500px] border-[#8a8886]" />
              <div className="flex w-[38px] pl-[12px]">
                {k === "sum" && <Svg w={17} h={18}><path d="M16.500 1H1.500L9.500 9L1.500 17H16.500" stroke="#252423" strokeWidth="1.600" /></Svg>}
                {k === "date" && (
                  <Svg w={18} h={18}>
                    <rect x="0.800" y="0.800" width="16.400" height="16.400" rx="3" stroke="#252423" strokeWidth="1.500" />
                    <path d="M1 5.500H17" stroke="#252423" strokeWidth="1.500" />
                    <path d="M4 9.500H14M4 13H11" stroke="#252423" strokeWidth="2" strokeDasharray="2 2" />
                  </Svg>
                )}
              </div>
              <T w={w} dy={0.5} className="leading-9">{t}</T>
            </div>
          ))}
        </div>
        <div className="h-[404px] w-3 bg-[#c8c8c8]" />
      </div>
    </aside>
  );
}

function StatusBar() {
  return (
    <div className="flex h-[35px] shrink-0 border-t border-[#dbdad9] bg-[#f3f2f1] text-[17px] leading-[24px] text-[#555352]">
      <T w={90} dy={1} className="ml-[5px] pt-[6px]">Page 1 of 2</T>
      <Svg w={190} h={34} vb="1600 973 190 34" className="ml-auto">
        <path d="M1602 990.500H1609" stroke="#444" strokeWidth="2.200" />
        <path d="M1616 990.200H1766" stroke="#605e5c" strokeWidth="1.300" />
        <path d="M1680 982H1686V999H1680ZM1690 987H1692.500V994H1690Z" fill="#605e5c" />
        <path d="M1774.500 990H1785.500M1780 984.500V995.500" stroke="#444" strokeWidth="2" />
      </Svg>
      <T w={36} dy={1} className="ml-[15px] pt-[4px]">90%</T>
      <Svg w={24} h={18} className="mt-[9px] mr-[27px] ml-[28px]">
        <rect x="0.800" y="0.800" width="22.400" height="16.400" stroke="#555" strokeWidth="1.500" />
        <path d="M4 7V4H8M16 4H20V7M20 11V14H16M8 14H4V11" stroke="#555" strokeWidth="1.600" />
      </Svg>
    </div>
  );
}

/* ---------- Taskbar ---------- */
function ChromeMark() {
  return (
    <g>
      <circle cx="18" cy="18" r="18" fill="#fbc116" />
      <path d="M18 18L2.400 9A18 18 0 0 0 18 36L25.800 22.500Z" fill="#1e9c4b" />
      <path d="M18 18H10.200L2.400 9A18 18 0 0 1 33.600 9H18Z" fill="#e33b2e" />
      <path d="M2.400 9L10.200 22.500L18 14Z" fill="#1e9c4b" />
      <circle cx="18" cy="18" r="9" fill="#fff" />
      <circle cx="18" cy="18" r="7" fill="#2a7de9" />
    </g>
  );
}

const APPS = [
  { id: "start", art: <><defs><linearGradient id="win" x1="0" y1="0" x2="1" y2="1" gradientUnits="objectBoundingBox"><stop stopColor="#6fe6ff" /><stop offset="1" stopColor="#1f9df5" /></linearGradient></defs><path d="M0 1H16.800V17.300H0ZM18.500 1H35V17.300H18.500ZM0 19H16.800V35.500H0ZM18.500 19H35V35.500H18.500Z" fill="url(#win)" /></> },
  { id: "search", art: <><circle cx="17" cy="15" r="13" fill="#4a4b3c" stroke="#f0f0f0" strokeWidth="2.600" /><path d="M26 24L33 33" stroke="#d5d8db" strokeWidth="4" strokeLinecap="round" /></> },
  { id: "tasks", art: <><rect x="0" y="10" width="27" height="25" rx="2" fill="#666765" /><rect x="9" y="1" width="27" height="25" rx="2" fill="#f2f2f2" /><path d="M9 10H27V26H9Z" fill="#b7b7b6" /></> },
  { id: "files", run: true, art: <><path d="M0 4Q0 2 2 2H12L15 5V12H0Z" fill="#dd9a0b" /><path d="M0 8H14L17 5H34Q36 5 36 7V33Q36 35 34 35H2Q0 35 0 33Z" fill="#fdd04c" /><path d="M6 35V27Q6 24 9 24H27Q30 24 30 27V35Z" fill="#1271c9" /><path d="M11 29.500H25" stroke="#0a4b91" strokeWidth="2" /></> },
  { id: "store", art: <><path d="M9 8V3Q9 1.500 10.500 1.500H25Q26.500 1.500 26.500 3V8" stroke="#3fb8f0" strokeWidth="2.500" /><path d="M1 5.500H35V31Q35 36 30 36H6Q1 36 1 31Z" fill="#f1f1f2" /><path d="M11 13H17.500V19.500H11Z" fill="#f25022" /><path d="M19 13H25.500V19.500H19Z" fill="#7fba00" /><path d="M11 21H17.500V27.500H11Z" fill="#00a4ef" /><path d="M19 21H25.500V27.500H19Z" fill="#ffb900" /></> },
  { id: "edge", run: true, art: <><circle cx="18" cy="18" r="18" fill="#1767b8" /><path d="M0 17Q1 0 18 0Q34 0 36 14Q37 23 27 24H21Q18 22 21 18Q21 11 14 11Q4 11 0 17Z" fill="#35c3d8" /><path d="M22 1Q34 3 36 14Q37 23 27 24H21Q18 22 22 18Q26 10 22 1Z" fill="#59d35f" /><path d="M0 17Q1 3 12 5Q22 7 21 14Q18 9 12 12Q8 15 9 24H1Z" fill="#1b8bd8" /><path d="M21 24Q30 28 33 23Q36 22 31 27Q24 30 16 26Z" fill="#292719" /><path d="M0 25H18V36H0ZM6 25V23H12V25" fill="#b8660b" /><circle cx="9" cy="30" r="1.500" fill="#fbe08b" /></> },
  { id: "chrome", art: <ChromeMark /> },
  { id: "outlook", art: <><path d="M8 13L22 2L36 15V33H8Z" fill="#1c6fd0" /><path d="M10 12L22 3L30 10L14 22Z" fill="#33b3f1" /><path d="M20 25L36 15V26Z" fill="#4cc9f6" /><rect x="0" y="7" width="18" height="19" rx="2" fill="#0f6fd1" /><circle cx="9" cy="16.500" r="4.500" stroke="#fff" strokeWidth="2.500" /><rect x="11" y="25" width="25" height="12" rx="2" fill="#2fe3e6" /><text x="13" y="35" fontSize="10" fontWeight="800" textLength="21" lengthAdjust="spacingAndGlyphs" fill="#0d2b33">NEW</text></> },
  { id: "chrome-v", run: true, art: <><ChromeMark /><circle cx="32" cy="5" r="12" fill="#7d54c0" /><text x="28.500" y="9.500" fontSize="12" fill="#e3d8f5">v</text></> },
  { id: "powerbi", active: true, art: <><rect x="18" y="0" width="12" height="36" rx="1" fill="#d99c0d" /><rect x="11" y="9" width="12" height="27" rx="1" fill="#f2c233" /><rect x="3.500" y="18" width="12" height="18" rx="1" fill="#fde17c" /></> },
  { id: "excel", run: true, art: <><path d="M9 2H35V34H9Z" fill="#1a9a5c" /><path d="M22 2H35V10H22Z" fill="#33c481" /><path d="M22 18H35V26H22Z" fill="#107c41" /><path d="M9 26H35V34H9Z" fill="#185c37" /><path d="M9 2H22V10H9Z" fill="#21a366" /><rect x="0" y="9" width="17" height="18" rx="1.500" fill="#107c41" /><path d="M5 13L12 23M12 13L5 23" stroke="#fff" strokeWidth="2.200" /></> },
  { id: "zoom", run: true, art: <><circle cx="18" cy="18" r="18" fill="#1668fd" /><text x="5" y="21" fontSize="10" fontWeight="600" textLength="26" lengthAdjust="spacingAndGlyphs" fill="#fff">zoom</text></> },
  { id: "whatsapp", run: true, art: <><path d="M2 34L4.500 25A16 16 0 1 1 11 31.500Z" stroke="#25d366" strokeWidth="3.500" /><path d="M12 10Q10 12 11 16Q14 24 22 27Q26 27 27 23L22 20L20 22Q16 20 14.500 16L16 14L14 10Z" fill="#25d366" /><circle cx="32" cy="5" r="12" fill="#e3a6e8" /><text x="27.500" y="11" fontSize="16" fill="#222">9</text></> },
];

function Taskbar() {
  return (
    <footer className="flex h-[73px] shrink-0 border-t border-black bg-[linear-gradient(90deg,#252719,#2c2819)]">
      <div className="flex w-full border-t-2 border-[#45463a]">
        <Svg w={435} h={70} vb="0 1010 435 70">
          <path d="M31 1039Q30 1030 36 1027Q46 1022 52 1034L50 1040H34Q28 1041 31 1039Z" fill="#b8cdf2" />
          <circle cx="48" cy="1044" r="15" fill="#e88322" />
          <path d="M30 1040Q29 1034 34 1032Q38 1025 45 1029L48 1040Z" fill="#cfdcf6" />
          <path d="M46 1058Q43 1052 48 1050Q52 1042 59 1045Q63 1048 63 1052Q67 1053 66 1058Z" fill="#c5d8f8" />
          <rect x="43" y="1018" width="35" height="24" rx="12" fill="#303136" />
          <text x="48" y="1035.500" fontSize="16" textLength="25" lengthAdjust="spacingAndGlyphs" fill="#fff">87°</text>
        </Svg>
        {APPS.map((a) => (
          <div key={a.id} className={"flex h-[60px] shrink-0 flex-col items-center pt-[13px] " + (a.active ? "mx-[3px] mt-[4px] w-[60px] rounded-[5px] border border-[#45443a] bg-[#38372b] pt-[12px]" : "mt-[4px] w-[66px]")}>
            <Svg w={36} h={36}>{a.art}</Svg>
            {a.run && <div className="mt-[5px] h-[5px] w-2 shrink-0 rounded-full bg-[#9c9b92]" />}
            {a.active && <div className="mt-[5px] h-[5px] w-6 shrink-0 rounded-full bg-[#e3a6e8]" />}
          </div>
        ))}
        <Svg w={227} h={70} vb="1293 1010 227 70">
          <path d="M1396 1047.500L1403.500 1040L1411 1047.500" stroke="#fff" strokeWidth="2" />
          <path d="M1442 1051Q1437 1047 1441 1043Q1444 1034 1452 1037Q1458 1040 1457 1045Q1460 1051 1455 1051Z" fill="#b9b9b9" />
          <circle cx="1456" cy="1048.500" r="7.500" fill="#57b9f5" />
          <path d="M1456 1047V1053M1456 1043.500V1045.500" stroke="#111" strokeWidth="2" />
          <path d="M1490 1051.500Q1485 1048 1489 1043Q1493 1034 1502 1037Q1506 1040 1507 1043Q1512 1045 1511 1049Q1510 1052 1507 1052Z" fill="#0f6cc6" />
          <path d="M1489 1050L1502 1042L1511 1047Q1511 1052 1507 1052H1491Z" fill="#2aa5ee" />
        </Svg>
        <div className="flex w-[72px] flex-col items-center pt-[12px] text-[17px] leading-[23px] text-white">
          <T w={36}>ENG</T>
          <T w={19}>IN</T>
        </div>
        <Svg w={110} h={70} vb="1592 1010 110 70">
          <g stroke="#fff" strokeWidth="1.900">
            <path d="M1601.500 1042Q1613 1031 1624.500 1042M1605 1046Q1613 1038 1621 1046M1608.500 1049.500Q1613 1045 1617.500 1049.500" />
            <path d="M1638 1040.500H1641.500L1647.500 1035.500V1052L1641.500 1047.500H1638ZM1652 1040.500L1659.500 1048M1659.500 1040.500L1652 1048" strokeWidth="1.600" />
            <path d="M1682 1037.500H1691Q1693.500 1037.500 1693.500 1040V1049Q1693.500 1051 1691 1051H1676.500Q1674 1051 1674 1049V1044" strokeWidth="1.600" />
          </g>
          <circle cx="1613" cy="1051.500" r="2" fill="#fff" />
          <path d="M1682 1040.500H1690.500V1048.500H1677V1045ZM1694.500 1041.500H1697V1047H1694.500ZM1677 1032L1673 1040H1676L1675 1045L1680 1037H1677Z" fill="#fff" />
        </Svg>
        <div className="flex w-[95px] flex-col items-end pt-[9.500px] text-[17.500px] leading-[24px] text-white">
          <T w={66}>1:45 PM</T>
          <T w={75}>7/7/2024</T>
        </div>
        <Svg w={123} h={70} vb="1797 1010 123 70">
          <path d="M1808.500 1050H1828L1825.500 1046V1041Q1825 1033.500 1818 1033.500T1811 1041V1046ZM1815 1050.500Q1815 1054 1818 1054T1821.500 1050.500" stroke="#fff" strokeWidth="1.700" strokeLinejoin="round" />
          <path d="M1864 1028H1878Q1882 1028 1883 1034L1875 1036Q1872 1036 1871 1041L1868 1052H1859Q1853 1051 1856 1043L1859 1033Q1860 1028 1864 1028Z" fill="#2d9ee8" />
          <path d="M1858 1036L1869 1046L1868 1052H1859Q1853 1051 1856 1043Z" fill="#b6cf3a" />
          <path d="M1876 1036H1884Q1891 1037 1889 1045L1886 1056H1870Z" fill="#d65ad5" />
          <path d="M1874 1044L1886 1040L1880 1056H1870Z" fill="#f2748f" />
          <rect x="1863" y="1051" width="27" height="11" rx="3" fill="#ffc80a" />
          <text x="1867" y="1060.500" fontSize="10" fontWeight="700" textLength="19" lengthAdjust="spacingAndGlyphs" fill="#222">PRE</text>
        </Svg>
      </div>
    </footer>
  );
}

export default function App() {
  return (
    <div className="flex h-[1080px] w-[1920px] flex-col overflow-hidden bg-white font-['Open_Sans','Noto_Sans',sans-serif]">
      <TitleBar />
      <Ribbon />
      <main className="flex h-[732px] shrink-0">
        <Nav />
        <div className="flex w-[1317px] shrink-0 flex-col">
          <div className="flex h-[679px]">
            <div className="flex w-[1269px] shrink-0 flex-col border-r border-[#b3b0ad] bg-white">
              <div className="flex">
                <Report />
                <div className="ml-[3px] h-[443px] w-3 rounded-full bg-[#c8c8c8]" />
              </div>
              <div className="mt-[3px] h-3 w-[896px] rounded-full bg-[#c8c8c8]" />
            </div>
            <Filters />
          </div>
          <PagesBar />
        </div>
        <VizPane />
        <DataPane />
      </main>
      <StatusBar />
      <Taskbar />
    </div>
  );
}
